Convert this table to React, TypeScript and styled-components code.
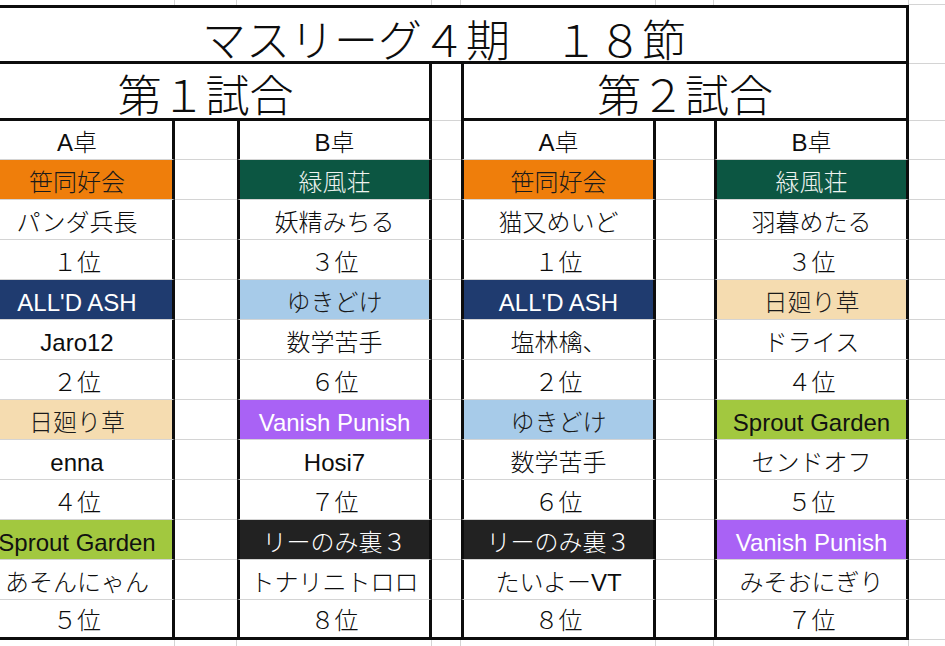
import React from 'react';
import styled, { createGlobalStyle } from 'styled-components';

const GRID = '#d4d4d4';
const INK = '#0d0d0d';

const Global = createGlobalStyle`
  *, *::before, *::after { box-sizing: border-box; }
  html, body { margin: 0; padding: 0; background: #fff; overflow: hidden; }
  body { font-family: "Liberation Sans", "Noto Sans CJK JP", sans-serif; color: ${INK}; }
`;

const Sheet = styled.div`
  display: grid;
  grid-template-columns: 193px 62px 195px 29px 195px 58px 195px 1fr;
  grid-template-rows: 5px 59px 57px 39px repeat(12, 40px) 1fr;
  height: 646px;
  width: calc(100% + 18px);
  margin-left: -18px;
  font-family: "Liberation Sans", "Noto Sans CJK JP", sans-serif;
  color: ${INK};
`;

const Kana = styled.span`
  font-family: "Noto Sans CJK JP", sans-serif;
  font-weight: 300;
`;

const StripCell = styled.div<{ $rest?: boolean; $bottom?: boolean }>`
  border-right: ${(p) => (p.$rest ? 'none' : `1px solid ${GRID}`)};
  border-bottom: ${(p) => (p.$bottom ? `1px solid ${GRID}` : 'none')};
`;

const TitleCell = styled.div`
  grid-column: 1 / 8;
  border-top: 3px solid ${INK};
  border-bottom: 3px solid ${INK};
  border-right: 3px solid ${INK};
  display: flex;
  justify-content: center;
  align-items: flex-end;
  font-size: 44px;
  line-height: 44px;
  padding-bottom: 1px;
  white-space: pre;
`;

const MatchHeader = styled.div<{ $second?: boolean }>`
  grid-column: span 3;
  border-bottom: 3px solid ${INK};
  border-right: 3px solid ${INK};
  border-left: ${(p) => (p.$second ? `3px solid ${INK}` : 'none')};
  display: flex;
  justify-content: center;
  align-items: flex-end;
  font-size: 44px;
  line-height: 44px;
  padding-bottom: 3px;
  white-space: pre;
`;

const RestCell = styled.div`
  border-bottom: 1px solid ${GRID};
`;

const GapCell = styled.div<{ $last?: boolean }>`
  border-bottom: ${(p) => (p.$last ? `3px solid ${INK}` : `1px solid ${GRID}`)};
`;

const Cell = styled.div<{ $bg?: string; $fg?: string; $l?: boolean; $last?: boolean }>`
  display: flex;
  justify-content: center;
  align-items: flex-end;
  padding-bottom: 4px;
  font-size: 24px;
  line-height: 24px;
  white-space: pre;
  background: ${(p) => p.$bg || '#fff'};
  color: ${(p) => p.$fg || INK};
  border-left: ${(p) => (p.$l ? `3px solid ${INK}` : 'none')};
  border-right: 3px solid ${INK};
  border-bottom: ${(p) => (p.$last ? `3px solid ${INK}` : `1px solid ${GRID}`)};
`;

const BottomStrip = styled.div<{ $rest?: boolean }>`
  border-right: ${(p) => (p.$rest ? 'none' : `1px solid ${GRID}`)};
`;

type Team = { bg: string; fg: string };
const TEAMS: Record<string, Team> = {
  '笹同好会': { bg: '#ef7e0b', fg: '#1a1a1a' },
  '緑風荘': { bg: '#0c5642', fg: '#eef3ef' },
  "ALL'D ASH": { bg: '#1f3b6f', fg: '#ffffff' },
  'ゆきどけ': { bg: '#a7cbe9', fg: '#1a1a1a' },
  '日廻り草': { bg: '#f5dcb0', fg: '#1a1a1a' },
  'Vanish Punish': { bg: '#a962f5', fg: '#ffffff' },
  'Sprout Garden': { bg: '#a2c83f', fg: '#111111' },
  'リーのみ裏３': { bg: '#222222', fg: '#ffffff' },
};

type Entry = { team: string; player: string; rank: string };

const columns: { label: string; entries: Entry[] }[] = [
  {
    label: 'A卓',
    entries: [
      { team: '笹同好会', player: 'パンダ兵長', rank: '１位' },
      { team: "ALL'D ASH", player: 'Jaro12', rank: '２位' },
      { team: '日廻り草', player: 'enna', rank: '４位' },
      { team: 'Sprout Garden', player: 'あそんにゃん', rank: '５位' },
    ],
  },
  {
    label: 'B卓',
    entries: [
      { team: '緑風荘', player: '妖精みちる', rank: '３位' },
      { team: 'ゆきどけ', player: '数学苦手', rank: '６位' },
      { team: 'Vanish Punish', player: 'Hosi7', rank: '７位' },
      { team: 'リーのみ裏３', player: 'トナリニトロロ', rank: '８位' },
    ],
  },
  {
    label: 'A卓',
    entries: [
      { team: '笹同好会', player: '猫又めいど', rank: '１位' },
      { team: "ALL'D ASH", player: '塩林檎、', rank: '２位' },
      { team: 'ゆきどけ', player: '数学苦手', rank: '６位' },
      { team: 'リーのみ裏３', player: 'たいよーVT', rank: '８位' },
    ],
  },
  {
    label: 'B卓',
    entries: [
      { team: '緑風荘', player: '羽暮めたる', rank: '３位' },
      { team: '日廻り草', player: 'ドライス', rank: '４位' },
      { team: 'Sprout Garden', player: 'センドオフ', rank: '５位' },
      { team: 'Vanish Punish', player: 'みそおにぎり', rank: '７位' },
    ],
  },
];

type RowCell = { text: string; bg?: string; fg?: string };

function cellFor(colIndex: number, row: number): RowCell {
  const col = columns[colIndex];
  if (row === 0) return { text: col.label };
  const e = col.entries[Math.floor((row - 1) / 3)];
  const kind = (row - 1) % 3;
  if (kind === 0) return { text: e.team, bg: TEAMS[e.team].bg, fg: TEAMS[e.team].fg };
  if (kind === 1) return { text: e.player };
  return { text: e.rank };
}

function Mixed({ text }: { text: string }) {
  const parts = text.match(/[\x20-\x7e]+|[^\x20-\x7e]+/g) || [];
  return (
    <span>
      {parts.map((p, i) =>
        /^[\x20-\x7e]+$/.test(p) ? <React.Fragment key={i}>{p}</React.Fragment> : <Kana key={i}>{p}</Kana>
      )}
    </span>
  );
}

export default function App() {
  const rows = Array.from({ length: 13 }, (_, i) => i);
  return (
    <>
      <Global />
      <Sheet>
        {Array.from({ length: 7 }, (_, i) => (
          <StripCell key={`s${i}`} />
        ))}
        <StripCell $rest $bottom />

        <TitleCell><Kana>マスリーグ４期　１８節</Kana></TitleCell>
        <RestCell />

        <MatchHeader><Kana>第１試合</Kana></MatchHeader>
        <GapCell />
        <MatchHeader $second><Kana>第２試合</Kana></MatchHeader>
        <RestCell />

        {rows.map((r) => {
          const last = r === 12;
          const c = [0, 1, 2, 3].map((ci) => cellFor(ci, r));
          return (
            <React.Fragment key={r}>
              <Cell $bg={c[0].bg} $fg={c[0].fg} $last={last}><Mixed text={c[0].text} /></Cell>
              <GapCell $last={last} />
              <Cell $l $bg={c[1].bg} $fg={c[1].fg} $last={last}><Mixed text={c[1].text} /></Cell>
              <GapCell $last={last} />
              <Cell $l $bg={c[2].bg} $fg={c[2].fg} $last={last}><Mixed text={c[2].text} /></Cell>
              <GapCell $last={last} />
              <Cell $l $bg={c[3].bg} $fg={c[3].fg} $last={last}><Mixed text={c[3].text} /></Cell>
              <RestCell />
            </React.Fragment>
          );
        })}

        {Array.from({ length: 7 }, (_, i) => (
          <BottomStrip key={`b${i}`} />
        ))}
        <BottomStrip $rest />
      </Sheet>
    </>
  );
}
